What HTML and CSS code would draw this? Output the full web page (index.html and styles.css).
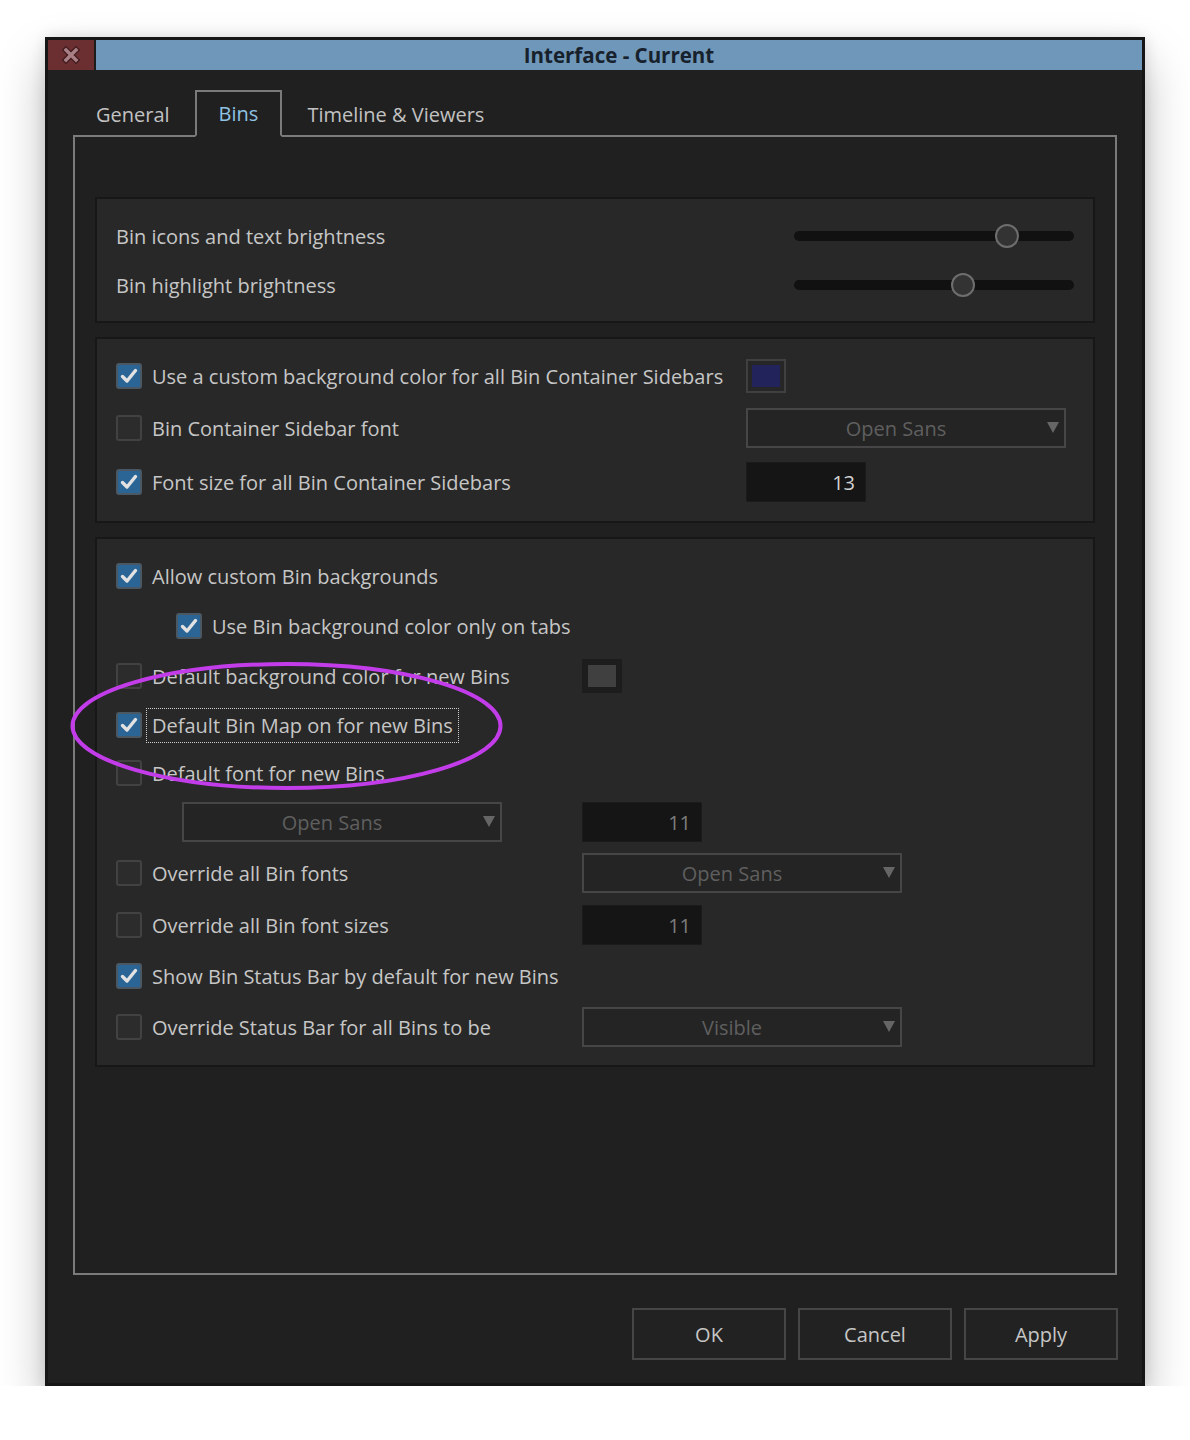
FILE: index.html
```html
<!DOCTYPE html>
<html>
<head>
<meta charset="utf-8">
<link rel="stylesheet" href="styles.css">
</head>
<body>
<div class="window">
  <div class="titlebar">
    <div class="close">
      <svg width="18" height="18" viewBox="0 0 18 18"><path d="M4 4 L14 14 M14 4 L4 14" stroke="#3e1a1c" stroke-width="6" stroke-linecap="square"/><path d="M4 4 L14 14 M14 4 L4 14" stroke="#a97f86" stroke-width="3.5" stroke-linecap="square"/></svg>
    </div>
    <div class="title">Interface - Current</div>
  </div>
  <div class="body">
    <div class="tabs">
      <div class="tab">General</div>
      <div class="tab active">Bins</div>
      <div class="tab">Timeline &amp; Viewers</div>
    </div>
    <div class="pane">
      <div class="group">
        <div class="row h50">
          <span class="slab">Bin icons and text brightness</span>
          <div class="slider"><div class="track"></div><div class="knob" style="left:201px"></div></div>
        </div>
        <div class="row h48">
          <span class="slab">Bin highlight brightness</span>
          <div class="slider"><div class="track"></div><div class="knob" style="left:157px"></div></div>
        </div>
      </div>

      <div class="group">
        <div class="row h50">
          <div class="lab w630"><span class="cb on"><svg width="22" height="22" viewBox="0 0 22 22"><path d="M4.5 11.5 L9 16 L17.5 5.5" fill="none" stroke="#e2e2e2" stroke-width="3.4" stroke-linecap="round" stroke-linejoin="round"/></svg></span><span class="txt">Use a custom background color for all Bin Container Sidebars</span></div>
          <div class="swatch"><div class="swatch-in navy"></div></div>
        </div>
        <div class="row h54">
          <div class="lab w630"><span class="cb"></span><span class="txt">Bin Container Sidebar font</span></div>
          <div class="dd"><span>Open Sans</span><i class="arrow"></i></div>
        </div>
        <div class="row h54">
          <div class="lab w630"><span class="cb on"><svg width="22" height="22" viewBox="0 0 22 22"><path d="M4.5 11.5 L9 16 L17.5 5.5" fill="none" stroke="#e2e2e2" stroke-width="3.4" stroke-linecap="round" stroke-linejoin="round"/></svg></span><span class="txt">Font size for all Bin Container Sidebars</span></div>
          <div class="num">13</div>
        </div>
      </div>

      <div class="group">
        <div class="row h50">
          <div class="lab"><span class="cb on"><svg width="22" height="22" viewBox="0 0 22 22"><path d="M4.5 11.5 L9 16 L17.5 5.5" fill="none" stroke="#e2e2e2" stroke-width="3.4" stroke-linecap="round" stroke-linejoin="round"/></svg></span><span class="txt">Allow custom Bin backgrounds</span></div>
        </div>
        <div class="row h50 indent">
          <div class="lab"><span class="cb on"><svg width="22" height="22" viewBox="0 0 22 22"><path d="M4.5 11.5 L9 16 L17.5 5.5" fill="none" stroke="#e2e2e2" stroke-width="3.4" stroke-linecap="round" stroke-linejoin="round"/></svg></span><span class="txt">Use Bin background color only on tabs</span></div>
        </div>
        <div class="row h50">
          <div class="lab w466"><span class="cb"></span><span class="txt">Default background color for new Bins</span></div>
          <div class="swatch dark"><div class="swatch-in grey"></div></div>
        </div>
        <div class="row h48">
          <div class="lab"><span class="cb on"><svg width="22" height="22" viewBox="0 0 22 22"><path d="M4.5 11.5 L9 16 L17.5 5.5" fill="none" stroke="#e2e2e2" stroke-width="3.4" stroke-linecap="round" stroke-linejoin="round"/></svg></span><span class="txt focus">Default Bin Map on for new Bins</span></div>
        </div>
        <div class="row h48">
          <div class="lab"><span class="cb"></span><span class="txt">Default font for new Bins</span></div>
        </div>
        <div class="row h50 subrow">
          <div class="dd"><span>Open Sans</span><i class="arrow"></i></div>
          <div class="num dim">11</div>
        </div>
        <div class="row h52">
          <div class="lab w466"><span class="cb"></span><span class="txt">Override all Bin fonts</span></div>
          <div class="dd"><span>Open Sans</span><i class="arrow"></i></div>
        </div>
        <div class="row h52">
          <div class="lab w466"><span class="cb"></span><span class="txt">Override all Bin font sizes</span></div>
          <div class="num dim">11</div>
        </div>
        <div class="row h50">
          <div class="lab"><span class="cb on"><svg width="22" height="22" viewBox="0 0 22 22"><path d="M4.5 11.5 L9 16 L17.5 5.5" fill="none" stroke="#e2e2e2" stroke-width="3.4" stroke-linecap="round" stroke-linejoin="round"/></svg></span><span class="txt">Show Bin Status Bar by default for new Bins</span></div>
        </div>
        <div class="row h52">
          <div class="lab w466"><span class="cb"></span><span class="txt">Override Status Bar for all Bins to be</span></div>
          <div class="dd"><span>Visible</span><i class="arrow"></i></div>
        </div>
      </div>
    </div>
    <div class="buttons">
      <div class="btn">OK</div>
      <div class="btn">Cancel</div>
      <div class="btn">Apply</div>
    </div>
  </div>
  <svg class="annot" width="440" height="140" viewBox="0 0 440 140"><ellipse cx="218.5" cy="66" rx="214" ry="62" fill="none" stroke="#c23de9" stroke-width="4"/></svg>
</div>
</body>
</html>
```

FILE: styles.css
```css
html, body {
  margin: 0;
  padding: 0;
  background: #ffffff;
}
body {
  font-family: "Open Sans", "DejaVu Sans", sans-serif;
  font-size: 20px;
  color: #c6c6c6;
}
.window {
  position: relative;
  width: 1100px;
  height: 1349px;
  margin: 37px 0 0 45px;
  box-sizing: border-box;
  border: 3px solid #161616;
  background: #202020;
  box-shadow: 0 24px 44px rgba(0, 0, 0, 0.26), 0 0 14px rgba(0, 0, 0, 0.12);
}
.titlebar {
  display: flex;
  height: 30px;
  background: #6f97b9;
}
.close {
  width: 46px;
  background: #6b2f31;
  border-right: 2px solid #1c1c1c;
  display: flex;
  align-items: center;
  justify-content: center;
}
.title {
  flex: 1;
  text-align: center;
  font-weight: 700;
  font-size: 20.5px;
  line-height: 29px;
  padding-top: 1px;
  color: #17212c;
}
.body {
  padding: 20px 25px 0;
}
.tabs {
  display: flex;
  height: 47px;
  margin-bottom: -2px;
  position: relative;
  z-index: 1;
}
.tab {
  box-sizing: border-box;
  height: 47px;
  padding: 0 21px;
  border: 2px solid transparent;
  border-bottom: none;
  display: flex;
  align-items: center;
  color: #c2c2c2;
  margin-right: 2px;
}
.tab.active {
  border-color: #7b7b7b;
  border-bottom: 2px solid #202020;
  color: #8fc2e3;
  padding: 0 22px;
}
.pane {
  box-sizing: border-box;
  height: 1140px;
  border: 2px solid #7b7b7b;
  padding: 60px 20px 0;
}
.group {
  background: #282828;
  border: 2px solid #171717;
  padding: 12px 19px;
  margin-bottom: 14px;
}
.row {
  display: flex;
  align-items: center;
}
.h48 { height: 48px; }
.h50 { height: 50px; }
.h52 { height: 52px; }
.h54 { height: 54px; }
.indent { padding-left: 60px; }
.subrow { padding-left: 66px; }
.subrow .num { margin-left: 80px; }
.slab {
  width: 678px;
  flex: none;
}
.slider {
  position: relative;
  width: 280px;
  height: 26px;
  display: flex;
  align-items: center;
}
.track {
  width: 280px;
  height: 10px;
  border-radius: 5px;
  background: #111111;
}
.knob {
  position: absolute;
  top: 1px;
  width: 24px;
  height: 24px;
  box-sizing: border-box;
  border-radius: 50%;
  border: 2px solid #6e6e6e;
  background: #333333;
}
.lab {
  display: flex;
  align-items: center;
  flex: none;
}
.w630 { width: 630px; }
.w466 { width: 466px; }
.cb {
  width: 26px;
  height: 26px;
  box-sizing: border-box;
  border: 2px solid #424242;
  border-radius: 3px;
  background: #2c2c2c;
  margin-right: 10px;
  flex: none;
  display: flex;
  align-items: center;
  justify-content: center;
}
.cb.on {
  background: #2b6596;
  border-color: #4a5864;
}
.txt {
  white-space: nowrap;
}
.txt.focus {
  border: 1px dotted #d0d0d0;
  padding: 3px 5px;
  margin-left: -6px;
}
.swatch {
  width: 40px;
  height: 34px;
  box-sizing: border-box;
  border: 2px solid #404040;
  background: #262626;
  padding: 4px;
}
.swatch.dark {
  border-color: #1d1d1d;
  background: #1d1d1d;
}
.swatch-in {
  width: 100%;
  height: 100%;
}
.swatch-in.navy { background: #22235b; }
.swatch-in.grey { background: #404040; }
.dd {
  position: relative;
  width: 320px;
  height: 40px;
  box-sizing: border-box;
  border: 2px solid #464646;
  background: #242424;
  color: #5f5f5f;
  display: flex;
  align-items: center;
  justify-content: center;
  padding-right: 20px;
}
.arrow {
  position: absolute;
  right: 5px;
  top: 12px;
  width: 0;
  height: 0;
  border-left: 6px solid transparent;
  border-right: 6px solid transparent;
  border-top: 11px solid #666666;
}
.num {
  width: 120px;
  height: 40px;
  box-sizing: border-box;
  background: #151515;
  border: 1px solid #1b1b1b;
  color: #d2d2d2;
  display: flex;
  align-items: center;
  justify-content: flex-end;
  padding-right: 10px;
}
.num.dim { color: #7c7c7c; }
.buttons {
  display: flex;
  justify-content: flex-end;
  gap: 12px;
  margin-top: 33px;
  margin-right: -1px;
}
.btn {
  width: 154px;
  height: 52px;
  box-sizing: border-box;
  border: 2px solid #464646;
  background: #222222;
  color: #c6c6c6;
  display: flex;
  align-items: center;
  justify-content: center;
}
.annot {
  position: absolute;
  left: 20px;
  top: 620px;
  overflow: visible;
}
```
